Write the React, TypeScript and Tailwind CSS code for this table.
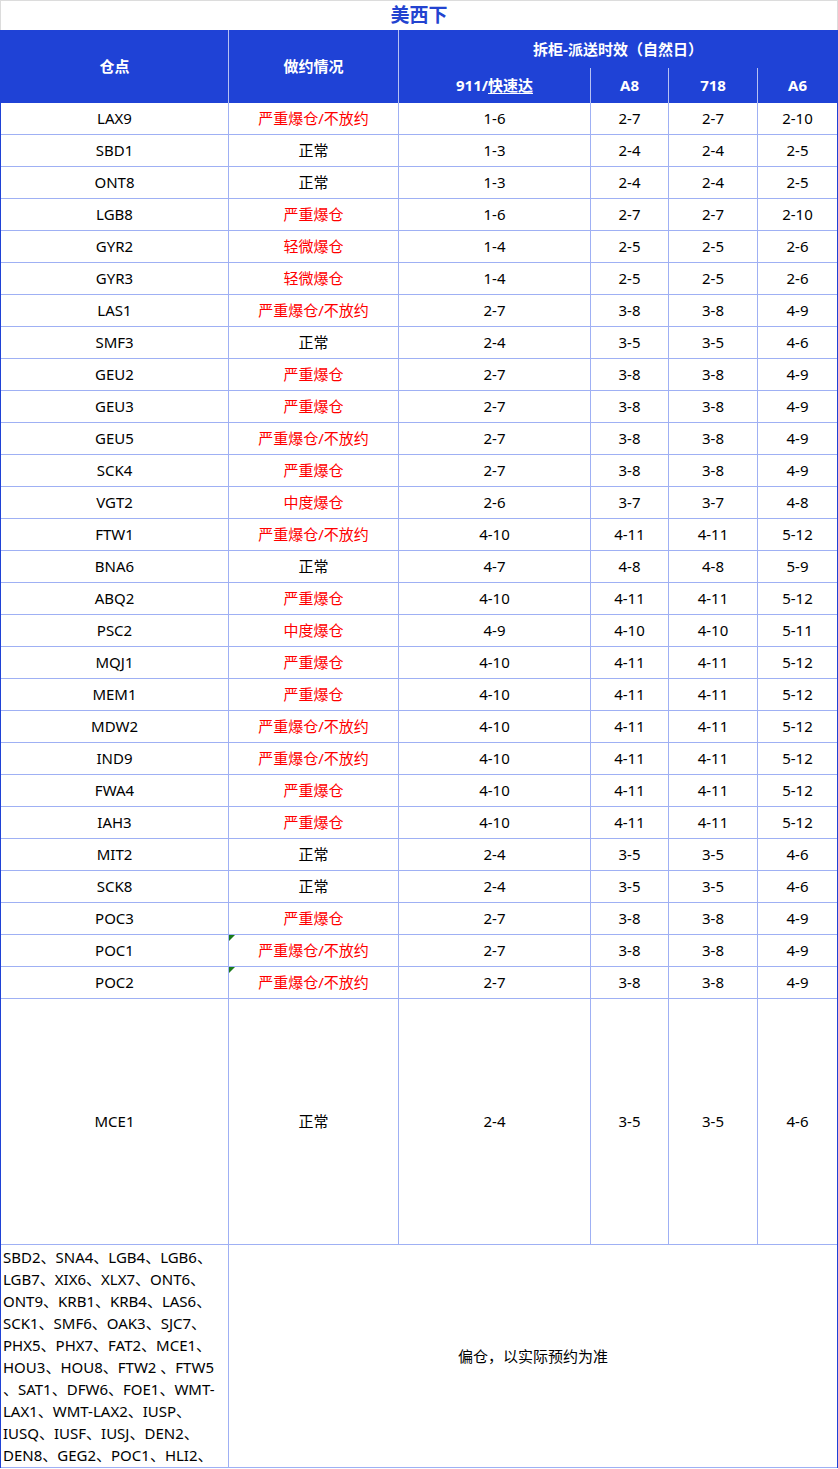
import React from "react";

type Row = [string, string, string, string, string, string, boolean?];

const rows: Row[] = [
  ["LAX9", "严重爆仓/不放约", "1-6", "2-7", "2-7", "2-10"],
  ["SBD1", "正常", "1-3", "2-4", "2-4", "2-5"],
  ["ONT8", "正常", "1-3", "2-4", "2-4", "2-5"],
  ["LGB8", "严重爆仓", "1-6", "2-7", "2-7", "2-10"],
  ["GYR2", "轻微爆仓", "1-4", "2-5", "2-5", "2-6"],
  ["GYR3", "轻微爆仓", "1-4", "2-5", "2-5", "2-6"],
  ["LAS1", "严重爆仓/不放约", "2-7", "3-8", "3-8", "4-9"],
  ["SMF3", "正常", "2-4", "3-5", "3-5", "4-6"],
  ["GEU2", "严重爆仓", "2-7", "3-8", "3-8", "4-9"],
  ["GEU3", "严重爆仓", "2-7", "3-8", "3-8", "4-9"],
  ["GEU5", "严重爆仓/不放约", "2-7", "3-8", "3-8", "4-9"],
  ["SCK4", "严重爆仓", "2-7", "3-8", "3-8", "4-9"],
  ["VGT2", "中度爆仓", "2-6", "3-7", "3-7", "4-8"],
  ["FTW1", "严重爆仓/不放约", "4-10", "4-11", "4-11", "5-12"],
  ["BNA6", "正常", "4-7", "4-8", "4-8", "5-9"],
  ["ABQ2", "严重爆仓", "4-10", "4-11", "4-11", "5-12"],
  ["PSC2", "中度爆仓", "4-9", "4-10", "4-10", "5-11"],
  ["MQJ1", "严重爆仓", "4-10", "4-11", "4-11", "5-12"],
  ["MEM1", "严重爆仓", "4-10", "4-11", "4-11", "5-12"],
  ["MDW2", "严重爆仓/不放约", "4-10", "4-11", "4-11", "5-12"],
  ["IND9", "严重爆仓/不放约", "4-10", "4-11", "4-11", "5-12"],
  ["FWA4", "严重爆仓", "4-10", "4-11", "4-11", "5-12"],
  ["IAH3", "严重爆仓", "4-10", "4-11", "4-11", "5-12"],
  ["MIT2", "正常", "2-4", "3-5", "3-5", "4-6"],
  ["SCK8", "正常", "2-4", "3-5", "3-5", "4-6"],
  ["POC3", "严重爆仓", "2-7", "3-8", "3-8", "4-9"],
  ["POC1", "严重爆仓/不放约", "2-7", "3-8", "3-8", "4-9", true],
  ["POC2", "严重爆仓/不放约", "2-7", "3-8", "3-8", "4-9", true],
];

const listLines = [
  "SBD2、SNA4、LGB4、LGB6、",
  "LGB7、XIX6、XLX7、ONT6、",
  "ONT9、KRB1、KRB4、LAS6、",
  "SCK1、SMF6、OAK3、SJC7、",
  "PHX5、PHX7、FAT2、MCE1、",
  "HOU3、HOU8、FTW2 、FTW5",
  "、SAT1、DFW6、FOE1、WMT-",
  "LAX1、WMT-LAX2、IUSP、",
  "IUSQ、IUSF、IUSJ、DEN2、",
  "DEN8、GEG2、POC1、HLI2、",
];

const cols = "grid grid-cols-[228px_170px_192px_78px_89px_79px]";
const cell = "flex items-center justify-center border-r border-b border-[#9fb0f4] h-[32px]";
const cellLast = "flex items-center justify-center border-b border-[#9fb0f4] h-[32px]";

function Mark() {
  return (
    <svg className="absolute left-0 top-0" width="6" height="6" viewBox="0 0 6 6">
      <polygon points="0,0 6,0 0,6" fill="#1a7a1a" />
    </svg>
  );
}

export default function App() {
  return (
    <div className="w-[838px] bg-white text-black font-['Noto_Sans','Noto_Sans_CJK_SC',sans-serif] text-[15px] leading-none">
      {/* Title */}
      <div className="h-[30px] border-t border-x border-[#dcdcdc] flex items-center justify-center">
        <span className="text-[19px] font-bold text-[#2343d0]">美西下</span>
      </div>

      <div className="border-x border-[#1f42d6]">
        {/* Header */}
        <div className={`${cols} grid-rows-[38px_35px] bg-[#1f42d6] text-white font-bold`}>
          <div className="row-span-2 flex items-center justify-center border-r border-[#b6c1f2]">仓点</div>
          <div className="row-span-2 flex items-center justify-center border-r border-[#b6c1f2]">做约情况</div>
          <div className="col-span-4 flex items-center justify-center">拆柜-派送时效（自然日）</div>
          <div className="flex items-center justify-center border-r border-[#b6c1f2]">
            <span>
              911/<span className="underline underline-offset-2">快速达</span>
            </span>
          </div>
          <div className="flex items-center justify-center border-r border-[#b6c1f2]">A8</div>
          <div className="flex items-center justify-center border-r border-[#b6c1f2]">718</div>
          <div className="flex items-center justify-center">A6</div>
        </div>

        {/* Body */}
        <div className={cols}>
          {rows.map((r) => (
            <React.Fragment key={r[0]}>
              <div className={cell}>{r[0]}</div>
              <div className={`${cell} relative ${r[1] === "正常" ? "text-black" : "text-[#ff0000]"}`}>
                {r[6] ? <Mark /> : null}
                {r[1]}
              </div>
              <div className={cell}>{r[2]}</div>
              <div className={cell}>{r[3]}</div>
              <div className={cell}>{r[4]}</div>
              <div className={cellLast}>{r[5]}</div>
            </React.Fragment>
          ))}

          {/* MCE1 */}
          <div className="flex items-center justify-center border-r border-b border-[#9fb0f4] h-[246px]">MCE1</div>
          <div className="flex items-center justify-center border-r border-b border-[#9fb0f4] h-[246px]">正常</div>
          <div className="flex items-center justify-center border-r border-b border-[#9fb0f4] h-[246px]">2-4</div>
          <div className="flex items-center justify-center border-r border-b border-[#9fb0f4] h-[246px]">3-5</div>
          <div className="flex items-center justify-center border-r border-b border-[#9fb0f4] h-[246px]">3-5</div>
          <div className="flex items-center justify-center border-b border-[#9fb0f4] h-[246px]">4-6</div>

          {/* Last row */}
          <div className="h-[223px] overflow-hidden border-r border-b border-[#9fb0f4] pl-[2px] pt-[1px] text-[15px] leading-[22px]">
            {listLines.map((l, i) => (
              <div key={i} className="whitespace-nowrap">{l}</div>
            ))}
          </div>
          <div className="col-span-5 h-[223px] flex items-center justify-center border-b border-[#9fb0f4]">
            偏仓，以实际预约为准
          </div>
        </div>
      </div>
    </div>
  );
}
